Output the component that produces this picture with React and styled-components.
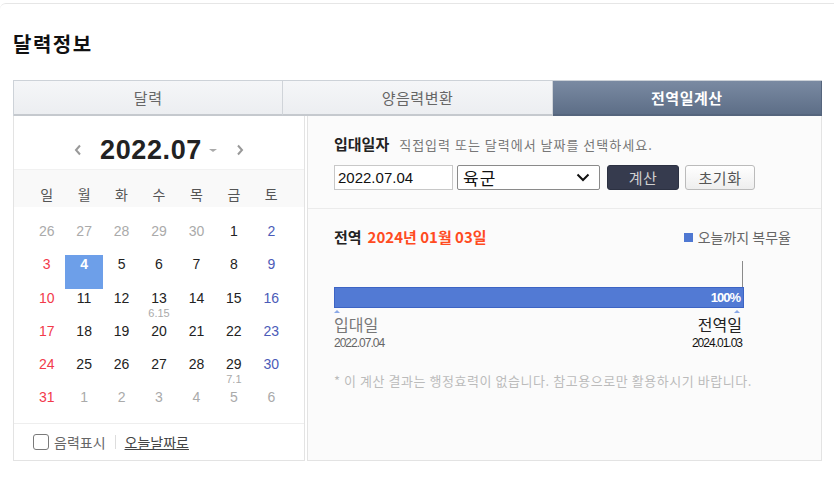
import React from 'react'
import styled, { createGlobalStyle } from 'styled-components'

const GlobalStyle = createGlobalStyle`
  body {
    margin: 0;
    background: #fff;
    font-family: "Noto Sans CJK KR", "Noto Sans", sans-serif;
    color: #222;
  }
  * { box-sizing: border-box; }
`

const Frame = styled.div`
  margin-top: 3px;
  border-top: 1px solid #e6e6e6;
  border-top-left-radius: 6px;
  padding: 0 12px 0 13px;
`

const Title = styled.h2`
  margin: 0 0 22px;
  padding-top: 26px;
  font-size: 20px;
  line-height: 28px;
  font-weight: 700;
  letter-spacing: 1.5px;
  color: #111;
`

const Tabs = styled.div`
  display: flex;
  height: 36px;
  border-top: 1px solid #cdd2d8;
  border-left: 1px solid #cdd2d8;
`

const Tab = styled.div`
  flex: 1;
  display: flex;
  align-items: center;
  justify-content: center;
  font-size: 15px;
  letter-spacing: 0.5px;
  color: ${(p) => (p.active ? '#fff' : '#666')};
  font-weight: ${(p) => (p.active ? 700 : 400)};
  background: ${(p) =>
    p.active
      ? 'linear-gradient(#7a8aa2, #5d6e87)'
      : 'linear-gradient(#f5f6f8, #eceef1)'};
  border-right: 1px solid ${(p) => (p.active ? '#55657d' : '#d0d4d9')};
  border-bottom: 2px solid ${(p) => (p.active ? '#55657d' : '#c5c9ce')};
`

const Body = styled.div`
  display: flex;
  gap: 2px;
  height: 345px;
`

const CalendarPanel = styled.div`
  width: 292px;
  border: 1px solid #e3e3e3;
  border-top: none;
  display: flex;
  flex-direction: column;
`

const MonthHeader = styled.div`
  height: 54px;
  padding-top: 14px;
  display: flex;
  align-items: center;
  justify-content: center;
  border-bottom: 1px solid #f1f1f1;
`

const NavArrow = styled.span`
  display: flex;
  margin: ${(p) => (p.next ? '0 0 0 19px' : '0 18px 0 0')};
`

const MonthTitle = styled.span`
  font-family: "Liberation Sans", Arial, sans-serif;
  font-size: 27px;
  font-weight: 700;
  letter-spacing: 0.6px;
  color: #222;
  line-height: 30px;
`

const Caret = styled.span`
  margin-left: 7px;
  margin-top: 2px;
  width: 0;
  height: 0;
  border-left: 4px solid transparent;
  border-right: 4px solid transparent;
  border-top: 3px solid #aaa;
`

const WeekRow = styled.div`
  display: grid;
  grid-template-columns: repeat(7, 1fr);
  height: 37px;
  padding: 13px 14px 0;
  background: #f9f9f9;
  font-size: 14px;
  line-height: 22px;
  color: #555;
  text-align: center;
`

const DayGrid = styled.div`
  display: grid;
  grid-template-columns: repeat(7, 1fr);
  grid-auto-rows: 33.3px;
  padding: 15px 14px 0;
  flex: 1;
`

const dayColor = (p) => {
  if (p.selected) return '#fff'
  if (p.muted) return '#aaa'
  if (p.col === 0) return '#f23a4b'
  if (p.col === 6) return '#4b5bb8'
  return '#222'
}

const DayCell = styled.div`
  display: flex;
  flex-direction: column;
  align-items: center;
  font-family: "Liberation Sans", Arial, sans-serif;
  font-size: 14px;
  line-height: 19px;
  color: ${dayColor};
  font-weight: ${(p) => (p.selected ? 700 : 400)};
  background: ${(p) => (p.selected ? '#6d9fe9' : 'transparent')};
`

const Lunar = styled.span`
  font-size: 11px;
  line-height: 11px;
  color: #aaa;
`

const CalFooter = styled.div`
  height: 37px;
  border-top: 1px solid #eee;
  display: flex;
  align-items: center;
  padding-left: 19px;
  font-size: 14px;
`

const CheckBox = styled.span`
  width: 16px;
  height: 16px;
  border: 1.5px solid #7a7a7a;
  border-radius: 3px;
  margin-right: 5px;
`

const FooterText = styled.span`
  color: #666;
`

const FooterSep = styled.span`
  width: 1px;
  height: 14px;
  background: #ddd;
  margin: 0 9px;
`

const FooterLink = styled.span`
  color: #444;
  text-decoration: underline;
`

const CalcPanel = styled.div`
  flex: 1;
  border: 1px solid #e3e3e3;
  border-top: none;
  background: #fbfbfb;
`

const EntrySection = styled.div`
  height: 93px;
  padding: 18px 0 0 26px;
  border-bottom: 1px solid #ebebeb;
`

const EntryLabel = styled.div`
  display: flex;
  align-items: baseline;
  line-height: 20px;
`

const LabelStrong = styled.span`
  font-size: 15px;
  font-weight: 700;
  color: #222;
  margin-right: 10px;
`

const Hint = styled.span`
  font-size: 13px;
  letter-spacing: 1px;
  color: #777;
`

const Controls = styled.div`
  display: flex;
  align-items: center;
  margin-top: 10px;
`

const DateInput = styled.input`
  width: 119px;
  height: 25px;
  border: 1px solid #c8c8c8;
  background: #fff;
  padding: 0 3px;
  font-family: "Liberation Sans", Arial, sans-serif;
  font-size: 15px;
  color: #111;
  outline: none;
`

const SelectBox = styled.div`
  width: 143px;
  height: 25px;
  margin-left: 4px;
  border: 1px solid #8a8a8a;
  border-radius: 2px;
  background: #fff;
  display: flex;
  align-items: center;
  justify-content: space-between;
  padding: 0 9px 0 5px;
  font-size: 17px;
  letter-spacing: 1px;
  color: #111;
`

const Button = styled.button`
  height: 25px;
  width: ${(p) => p.w}px;
  margin-left: ${(p) => p.gap}px;
  border-radius: 3px;
  font-family: inherit;
  font-size: 15px;
  letter-spacing: 0.5px;
  line-height: 1;
  padding: 0;
  border: 1px solid ${(p) => (p.dark ? '#2c3142' : '#bbb')};
  background: ${(p) => (p.dark ? '#363b4e' : 'linear-gradient(#fff, #eee)')};
  color: ${(p) => (p.dark ? '#d0d0d0' : '#555')};
`

const ResultSection = styled.div`
  padding: 18px 30px 0 26px;
`

const ResultHead = styled.div`
  display: flex;
  justify-content: space-between;
  align-items: center;
  line-height: 20px;
`

const ResultTitle = styled.span`
  font-size: 15px;
  font-weight: 700;
  color: #222;
`

const ResultDate = styled.span`
  color: #ff4b1f;
  margin-left: 6px;
  font-weight: 700;
`

const Legend = styled.span`
  display: flex;
  align-items: center;
  font-size: 14px;
  color: #666;
`

const LegendDot = styled.span`
  width: 9px;
  height: 9px;
  background: #4f78d2;
  margin-right: 5px;
`

const Timeline = styled.div`
  width: 410px;
  margin-top: 14px;
`

const MarkerRow = styled.div`
  display: flex;
  justify-content: flex-end;
  padding-right: 1px;
`

const Marker = styled.span`
  width: 1px;
  height: 26px;
  background: #8a8a8a;
`

const Track = styled.div`
  height: 21px;
  display: flex;
`

const Fill = styled.div`
  height: 100%;
  background: #527ad4;
  border: 1px solid #3d64c4;
  display: flex;
  align-items: center;
  justify-content: flex-end;
  padding-right: 3px;
  font-family: "Liberation Sans", Arial, sans-serif;
  font-size: 13px;
  font-weight: 700;
  letter-spacing: -1px;
  color: #fff;
`

const TickRow = styled.div`
  display: flex;
  justify-content: space-between;
  margin-top: 2px;
  padding-right: 4px;
`

const Tick = styled.span`
  width: 0;
  height: 0;
  border-left: 3px solid transparent;
  border-right: 3px solid transparent;
  border-bottom: 3px solid #8aa8e6;
`

const LabelRow = styled.div`
  display: flex;
  justify-content: space-between;
  padding-right: 2px;
`

const EndLabel = styled.div`
  display: flex;
  flex-direction: column;
  align-items: ${(p) => (p.right ? 'flex-end' : 'flex-start')};
`

const EndName = styled.span`
  font-size: 16px;
  line-height: 23px;
  color: ${(p) => (p.right ? '#222' : '#777')};
`

const EndDate = styled.span`
  font-family: "Liberation Sans", Arial, sans-serif;
  font-size: 12px;
  line-height: 14px;
  letter-spacing: -1px;
  color: ${(p) => (p.right ? '#111' : '#666')};
`

const Note = styled.p`
  margin: 22px 0 0;
  font-size: 13px;
  line-height: 18px;
  letter-spacing: 0.55px;
  color: #bbb;
`

const Chevron = ({ dir = 'left', color = '#999' }) => (
  <svg width="8" height="12" viewBox="0 0 8 12">
    <path
      d={dir === 'left' ? 'M6 1.5 L2 6 L6 10.5' : 'M2 1.5 L6 6 L2 10.5'}
      fill="none"
      stroke={color}
      strokeWidth="2"
    />
  </svg>
)

const DownChevron = () => (
  <svg width="14" height="9" viewBox="0 0 14 9">
    <path d="M1.5 1.5 L7 7 L12.5 1.5" fill="none" stroke="#111" strokeWidth="2" />
  </svg>
)

const weeks = [
  [26, 27, 28, 29, 30, 1, 2],
  [3, 4, 5, 6, 7, 8, 9],
  [10, 11, 12, 13, 14, 15, 16],
  [17, 18, 19, 20, 21, 22, 23],
  [24, 25, 26, 27, 28, 29, 30],
  [31, 1, 2, 3, 4, 5, 6],
]

const lunarMarks = { 13: '6.15', 29: '7.1' }
const weekdays = ['일', '월', '화', '수', '목', '금', '토']

const App = () => {
  const rate = 100
  return (
    <>
      <GlobalStyle />
      <Frame>
        <Title>달력정보</Title>
        <Tabs>
          <Tab>달력</Tab>
          <Tab>양음력변환</Tab>
          <Tab active>전역일계산</Tab>
        </Tabs>
        <Body>
          <CalendarPanel>
            <MonthHeader>
              <NavArrow>
                <Chevron dir="left" />
              </NavArrow>
              <MonthTitle>2022.07</MonthTitle>
              <Caret />
              <NavArrow next>
                <Chevron dir="right" />
              </NavArrow>
            </MonthHeader>
            <WeekRow>
              {weekdays.map((w) => (
                <span key={w}>{w}</span>
              ))}
            </WeekRow>
            <DayGrid>
              {weeks.map((week, wi) =>
                week.map((d, col) => {
                  const muted = (wi === 0 && d > 20) || (wi === 5 && d < 20)
                  return (
                    <DayCell
                      key={`${wi}-${col}`}
                      col={col}
                      muted={muted}
                      selected={wi === 1 && d === 4}
                    >
                      {d}
                      {!muted && lunarMarks[d] && wi > 1 && (
                        <Lunar>{lunarMarks[d]}</Lunar>
                      )}
                    </DayCell>
                  )
                })
              )}
            </DayGrid>
            <CalFooter>
              <CheckBox />
              <FooterText>음력표시</FooterText>
              <FooterSep />
              <FooterLink>오늘날짜로</FooterLink>
            </CalFooter>
          </CalendarPanel>

          <CalcPanel>
            <EntrySection>
              <EntryLabel>
                <LabelStrong>입대일자</LabelStrong>
                <Hint>직접입력 또는 달력에서 날짜를 선택하세요.</Hint>
              </EntryLabel>
              <Controls>
                <DateInput defaultValue="2022.07.04" />
                <SelectBox>
                  <span>육군</span>
                  <DownChevron />
                </SelectBox>
                <Button dark w={72} gap={7}>계산</Button>
                <Button w={70} gap={6}>초기화</Button>
              </Controls>
            </EntrySection>

            <ResultSection>
              <ResultHead>
                <ResultTitle>
                  전역
                  <ResultDate>2024년 01월 03일</ResultDate>
                </ResultTitle>
                <Legend>
                  <LegendDot />
                  오늘까지 복무율
                </Legend>
              </ResultHead>
              <Timeline>
                <MarkerRow>
                  <Marker />
                </MarkerRow>
                <Track>
                  <Fill style={{ width: `${rate}%` }}>{rate}%</Fill>
                </Track>
                <TickRow>
                  <Tick />
                  <Tick />
                </TickRow>
                <LabelRow>
                  <EndLabel>
                    <EndName>입대일</EndName>
                    <EndDate>2022.07.04</EndDate>
                  </EndLabel>
                  <EndLabel right>
                    <EndName right>전역일</EndName>
                    <EndDate right>2024.01.03</EndDate>
                  </EndLabel>
                </LabelRow>
              </Timeline>
              <Note>* 이 계산 결과는 행정효력이 없습니다. 참고용으로만 활용하시기 바랍니다.</Note>
            </ResultSection>
          </CalcPanel>
        </Body>
      </Frame>
    </>
  )
}

export default App
